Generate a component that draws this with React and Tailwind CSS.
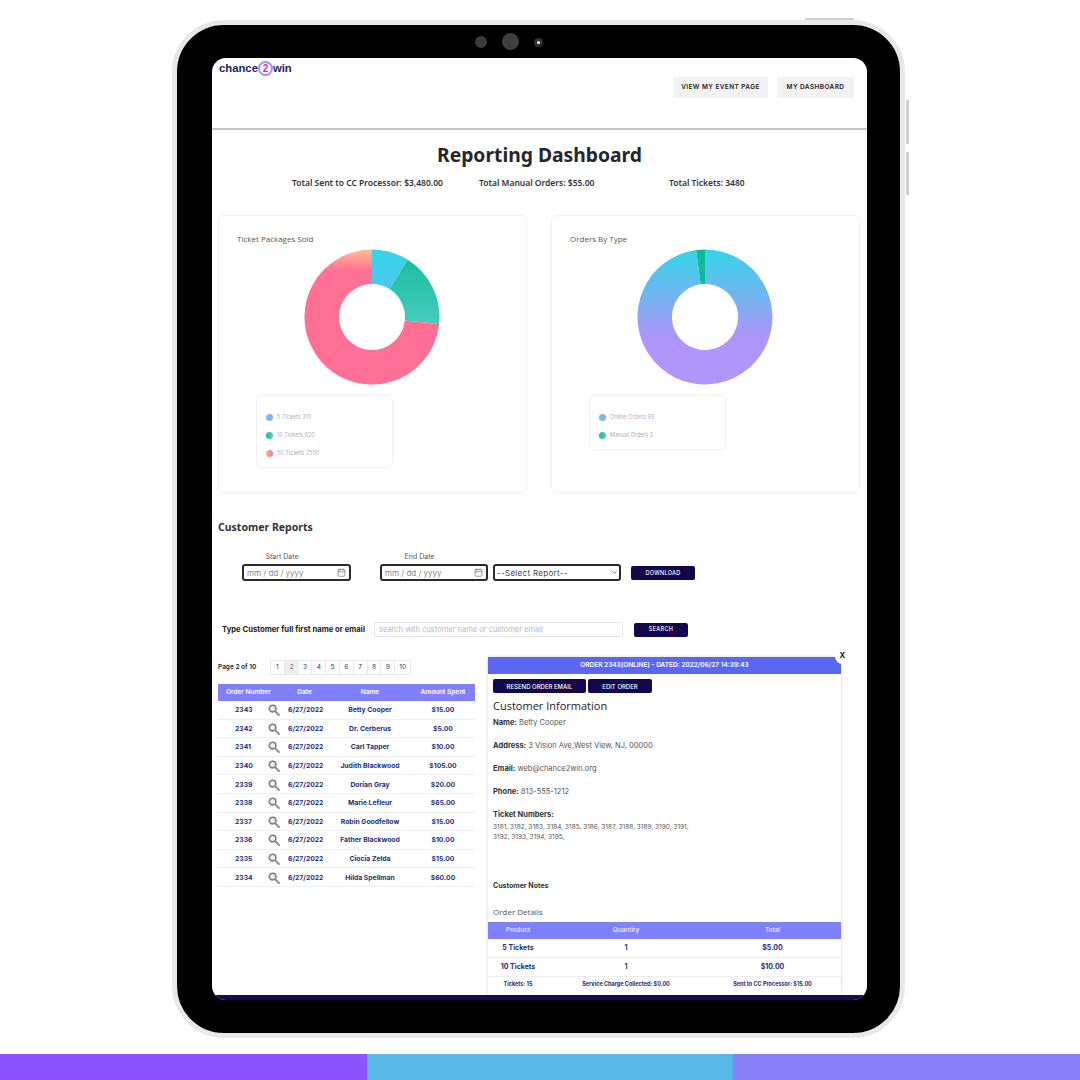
import { Calendar, ChevronDown } from 'lucide-react';

const NAVY = 'text-[#1c2f7a]';

const ORDERS = [
  ['2343', 'Betty Cooper', '$15.00'],
  ['2342', 'Dr. Cerberus', '$5.00'],
  ['2341', 'Carl Tapper', '$10.00'],
  ['2340', 'Judith Blackwood', '$105.00'],
  ['2339', 'Dorian Gray', '$20.00'],
  ['2338', 'Marie Lefleur', '$65.00'],
  ['2337', 'Robin Goodfellow', '$15.00'],
  ['2336', 'Father Blackwood', '$10.00'],
  ['2335', 'Ciocia Zelda', '$15.00'],
  ['2334', 'Hilda Spellman', '$60.00'],
];

const PAGES = [1, 2, 3, 4, 5, 6, 7, 8, 9, 10];

// Build one donut slice, angles in degrees clockwise from 12 o'clock
function slice(start, end, outer = 67.5, inner = 33, c = 68) {
  const pt = (r, a) => {
    const t = ((a - 90) * Math.PI) / 180;
    return `${(c + r * Math.cos(t)).toFixed(2)} ${(c + r * Math.sin(t)).toFixed(2)}`;
  };
  const large = end - start > 180 ? 1 : 0;
  return `M${pt(outer, start)} A${outer} ${outer} 0 ${large} 1 ${pt(outer, end)} L${pt(inner, end)} A${inner} ${inner} 0 ${large} 0 ${pt(inner, start)} Z`;
}

function Grad({ id, from, to, stop = 1 }) {
  return (
    <linearGradient id={id} gradientUnits="userSpaceOnUse" x1="0" y1="0" x2="0" y2={136 * stop}>
      <stop offset="0" stopColor={from} />
      <stop offset="1" stopColor={to} />
    </linearGradient>
  );
}

function PackagesDonut() {
  return (
    <svg width="136" height="136" viewBox="0 0 136 136">
      <defs>
        <Grad id="g1" from="#32d6e8" to="#9aa0fb" />
        <Grad id="g2" from="#12bb9c" to="#55d0c6" stop={0.7} />
        <Grad id="g3" from="#ffc092" to="#ff7096" stop={0.16} />
      </defs>
      <path d={slice(0, 32)} fill="url(#g1)" />
      <path d={slice(32, 96)} fill="url(#g2)" />
      <path d={slice(96, 360)} fill="url(#g3)" />
    </svg>
  );
}

function TypeDonut() {
  return (
    <svg width="136" height="136" viewBox="0 0 136 136">
      <defs>
        <Grad id="g4" from="#32d6e8" to="#b095fa" stop={0.66} />
        <Grad id="g5" from="#0cb99a" to="#14c0a0" />
      </defs>
      <path d={slice(0, 352.4)} fill="url(#g4)" />
      <path d={slice(352.4, 360)} fill="url(#g5)" />
    </svg>
  );
}

function LegendRow({ dot, label }) {
  return (
    <div className="flex items-center gap-[4px] h-[18px]">
      <span className={`w-[7px] h-[7px] rounded-full ${dot}`} />
      <span className="text-[5.5px] text-[#b0b0b8]">{label}</span>
    </div>
  );
}

function ChartCard({ title, chart, legendHeight, children }) {
  return (
    <div className="w-[309px] h-[278px] rounded-[6px] border border-[#f2f2f2] shadow-[0_0_3px_rgba(0,0,0,0.04)] flex flex-col">
      <div className="pl-[18px] pt-[17px] h-[33px] text-[8px] leading-[12px] text-[#555] font-['Open_Sans',sans-serif]">{title}</div>
      <div className="flex justify-center pr-[2px]">{chart}</div>
      <div
        className={`ml-[37px] mt-[10px] w-[137px] ${legendHeight} rounded-[6px] border border-[#f2f2f2] shadow-[0_0_3px_rgba(0,0,0,0.04)] pl-[9px] pt-[12px]`}
      >
        {children}
      </div>
    </div>
  );
}

function DateField({ label, width }) {
  return (
    <div className={`flex flex-col ${width}`}>
      <div className="h-[12px] text-[7px] leading-[10px] text-[#555] text-center pr-[29px]">{label}</div>
      <div className="h-[17px] border-2 border-[#2a2a2a] rounded-[3px] flex items-center justify-between pl-[3px] pr-[3px] text-[8px] text-[#888]">
        <span>mm / dd / yyyy</span>
        <Calendar size={9} strokeWidth={1.5} className="text-[#555]" />
      </div>
    </div>
  );
}

function Magnifier() {
  return (
    <svg width="12" height="12" viewBox="0 0 12 12">
      <circle cx="4.6" cy="4.6" r="3.3" fill="#ececec" stroke="#7d7d7d" strokeWidth="1.6" />
      <path d="M7.2 7.2 L10.9 10.9" stroke="#929292" strokeWidth="2.1" strokeLinecap="round" />
    </svg>
  );
}

function InfoLine({ label, value }) {
  return (
    <div className="h-[23px] text-[7.5px] leading-[10px] text-[#555]">
      <b className="font-bold text-[#333]">{label}</b> {value}
    </div>
  );
}

function OrderRow({ cells, small }) {
  const widths = ['w-[60px]', 'w-[156px]', 'w-[137px]'];
  return (
    <div className={`flex items-center font-bold ${NAVY} ${small ? 'h-[19px] pb-[4px] text-[5.5px]' : 'h-[19px] border-b border-[#eee] text-[7px]'}`}>
      {cells.map((c, i) => (
        <div key={c} className={`${widths[i]} text-center whitespace-nowrap`}>{c}</div>
      ))}
    </div>
  );
}

export default function App() {
  return (
    <div className="w-[1080px] h-[1080px] bg-white flex flex-col font-['Inter',sans-serif] overflow-hidden">
      <div className="h-[1054px] pt-[20px] pl-[172px]">
        {/* Tablet */}
        <div className="relative w-[733px] h-[1018px] rounded-[52px] border-[5px] border-[#e8e8e8] bg-black pl-[35px] pt-[33px]">
          <span className="absolute -top-[7px] left-[628px] w-[49px] h-[2px] bg-[#cfcfcf]" />
          <span className="absolute left-[729px] top-[75px] w-[3px] h-[44px] bg-[#cfcfcf]" />
          <span className="absolute left-[729px] top-[127px] w-[3px] h-[43px] bg-[#cfcfcf]" />
          <span className="absolute left-[298px] top-[11px] w-[12px] h-[12px] rounded-full bg-[#3a3a3a]" />
          <span className="absolute left-[325px] top-[8px] w-[17px] h-[17px] rounded-full bg-[#3f3f3f]" />
          <span className="absolute left-[357px] top-[13px] w-[9px] h-[9px] rounded-full bg-[#333] flex items-center justify-center">
            <span className="w-[3px] h-[3px] rounded-full bg-white" />
          </span>

          {/* Screen */}
          <div className="w-[655px] h-[942px] bg-white rounded-[14px] overflow-hidden flex flex-col">
            <header className="h-[72px] shrink-0 border-b-2 border-[#c8c8c8] flex justify-between">
              <div className="pl-[7px] pt-[3px] flex items-center h-[18px] text-[11.3px] font-bold text-[#241a63] font-['Liberation_Sans',sans-serif]">
                <span>chance</span>
                <span className="w-[15px] h-[15px] rounded-full border-2 border-[#a78bfa] flex items-center justify-center text-[10px] leading-none font-bold text-[#d21ee8]">2</span>
                <span>win</span>
              </div>
              <div className="pt-[19px] pr-[13px] flex gap-[9px]">
                <div className="w-[95px] h-[21px] bg-[#f2f2f2] flex items-center justify-center text-[6.5px] font-semibold tracking-[0.4px] text-[#222]">VIEW MY EVENT PAGE</div>
                <div className="w-[77px] h-[21px] bg-[#f2f2f2] flex items-center justify-center text-[6.5px] font-semibold tracking-[0.4px] text-[#222]">MY DASHBOARD</div>
              </div>
            </header>

            <h1 className="mt-[10px] h-[30px] text-center text-[19.3px] leading-[30px] font-bold text-[#23272b] font-['Noto_Sans',sans-serif]">Reporting Dashboard</h1>

            <div className="mt-[6px] h-[14px] pl-[80px] flex items-center text-[8.5px] font-semibold text-[#333] font-['Noto_Sans',sans-serif]">
              <span className="w-[187px]">Total Sent to CC Processor: $3,480.00</span>
              <span className="w-[190px]">Total Manual Orders: $55.00</span>
              <span>Total Tickets: 3480</span>
            </div>

            <div className="mt-[25px] pl-[6px] flex gap-[24px]">
              <ChartCard title="Ticket Packages Sold" chart={<PackagesDonut />} legendHeight="h-[73px]">
                <LegendRow dot="bg-gradient-to-r from-[#5cc8ee] to-[#9a9cfb]" label="5 Tickets 310" />
                <LegendRow dot="bg-gradient-to-r from-[#12bb9c] to-[#55d0c6]" label="10 Tickets 620" />
                <LegendRow dot="bg-gradient-to-r from-[#ffb090] to-[#ff7096]" label="50 Tickets 2550" />
              </ChartCard>
              <ChartCard title="Orders By Type" chart={<TypeDonut />} legendHeight="h-[55px]">
                <LegendRow dot="bg-gradient-to-r from-[#32d6e8] to-[#a098fa]" label="Online Orders 93" />
                <LegendRow dot="bg-gradient-to-r from-[#0cb99a] to-[#55d0c6]" label="Manual Orders 2" />
              </ChartCard>
            </div>

            <h2 className="mt-[27px] pl-[6px] h-[14px] text-[10.5px] leading-[14px] font-bold text-[#333] font-['Noto_Sans',sans-serif]">Customer Reports</h2>

            <div className="mt-[18px] pl-[30px] flex items-end">
              <DateField label="Start Date" width="w-[109px]" />
              <div className="w-[29px]" />
              <DateField label="End Date" width="w-[108px]" />
              <div className="relative ml-[5px] w-[128px] h-[17px]">
                <select className="block w-full h-full appearance-none border-2 border-[#2a2a2a] rounded-[3px] bg-white pl-[2px] text-[8px] tracking-[0.3px] text-[#444]">
                  <option>--Select Report--</option>
                </select>
                <ChevronDown size={7} strokeWidth={2.5} className="absolute right-[3px] top-[5px] text-[#444]" />
              </div>
              <div className="ml-[10px] mb-[1px] w-[64px] h-[14px] rounded-[2px] bg-[#14074d] flex items-center justify-center text-[5.5px] font-medium tracking-[0.3px] text-white">DOWNLOAD</div>
            </div>

            <div className="mt-[41px] pl-[10px] flex items-center">
              <span className="w-[152px] text-[7.7px] font-bold text-[#222] whitespace-nowrap">Type Customer full first name or email</span>
              <div className="w-[249px] h-[15px] border border-[#e4e4e4] rounded-[2px] pl-[4px] flex items-center text-[7.5px] text-[#b8b8b8]">search with customer name or customer email</div>
              <div className="ml-[11px] w-[54px] h-[14px] rounded-[2px] bg-[#14074d] flex items-center justify-center text-[5.5px] font-medium tracking-[0.3px] text-white">SEARCH</div>
            </div>

            <div className="mt-[19px] pl-[6px] flex gap-[13px] flex-1 min-h-0">
              {/* Orders list */}
              <div className="w-[257px] pt-[4px]">
                <div className="flex items-center h-[15px]">
                  <span className="w-[52px] text-[6.5px] font-semibold text-[#222]">Page 2 of 10</span>
                  <div className="flex h-[15px] border border-[#e8e8e8]">
                    {PAGES.map(p => (
                      <span
                        key={p}
                        className={`${p === 10 ? 'w-[15px]' : 'w-[13.8px]'} flex items-center justify-center text-[6.5px] ${p === 2 ? 'bg-[#eee] text-[#666]' : 'text-[#2a3a7a] border-r border-[#e8e8e8] last:border-r-0'}`}
                      >
                        {p}
                      </span>
                    ))}
                  </div>
                </div>
                <div className="mt-[9px] h-[17px] bg-[#8080fb] grid grid-cols-[50px_20px_33px_98px_48px] items-center text-[6.5px] font-semibold text-white">
                  <span className="col-span-2 pl-[8px] whitespace-nowrap">Order Number</span>
                  <span className="text-center">Date</span>
                  <span className="text-center">Name</span>
                  <span className="text-center whitespace-nowrap">Amount Spent</span>
                </div>
                {ORDERS.map(([num, name, amt]) => (
                  <div key={num} className={`h-[18.6px] pt-[1px] border-b border-[#eee] grid grid-cols-[50px_20px_33px_98px_48px] items-center text-[6.8px] font-bold ${NAVY}`}>
                    <span className="pl-[17px]">{num}</span>
                    <span><Magnifier /></span>
                    <span className="whitespace-nowrap">6/27/2022</span>
                    <span className="text-center whitespace-nowrap">{name}</span>
                    <span className="text-center">{amt}</span>
                  </div>
                ))}
              </div>

              {/* Order detail panel */}
              <div className="relative mt-[1px] w-[353px] self-start h-[338px] shadow-[0_0_3px_rgba(0,0,0,0.18)]">
                <span className="absolute -top-[8px] -right-[9px] w-[15px] h-[15px] rounded-full bg-white flex items-center justify-center text-[9px] font-bold text-[#111] font-['Liberation_Mono',monospace]">X</span>
                <div className="h-[17px] bg-[#5b67f0] flex items-center justify-center text-[6.5px] font-semibold text-white">ORDER 2343(ONLINE) - DATED: 2022/06/27 14:39:43</div>
                <div className="mt-[5px] ml-[5px] flex gap-[2px]">
                  <div className="w-[93px] h-[14px] rounded-[2px] bg-[#14074d] flex items-center justify-center text-[6px] font-medium text-white">RESEND ORDER EMAIL</div>
                  <div className="w-[64px] h-[14px] rounded-[2px] bg-[#14074d] flex items-center justify-center text-[6px] font-medium text-white">EDIT ORDER</div>
                </div>
                <div className="pl-[5px]">
                  <div className="mt-[5px] h-[16px] text-[11px] leading-[16px] text-[#222] font-['Open_Sans',sans-serif]">Customer Information</div>
                  <div className="mt-[4px]">
                    <InfoLine label="Name:" value="Betty Cooper" />
                    <InfoLine label="Address:" value="3 Vision Ave,West View, NJ, 00000" />
                    <InfoLine label="Email:" value="web@chance2win.org" />
                    <InfoLine label="Phone:" value="813-555-1212" />
                  </div>
                  <div className="h-[10px] text-[7.5px] leading-[10px] font-bold text-[#333]">Ticket Numbers:</div>
                  <div className="mt-[2px] w-[210px] text-[6.5px] leading-[10px] text-[#555]">3181, 3182, 3183, 3184, 3185, 3186, 3187, 3188, 3189, 3190, 3191, 3192, 3193, 3194, 3195,</div>
                  <div className="mt-[39px] h-[10px] text-[7px] leading-[10px] font-bold text-[#333]">Customer Notes</div>
                  <div className="mt-[15px] h-[12px] text-[8px] leading-[12px] text-[#555] font-['Open_Sans',sans-serif]">Order Details</div>
                </div>
                <div className="mt-[4px] h-[17px] bg-[#8080fb] flex items-center text-[6.5px] font-medium text-[#eef]">
                  <span className="w-[60px] text-center">Product</span>
                  <span className="w-[156px] text-center">Quantity</span>
                  <span className="w-[137px] text-center">Total</span>
                </div>
                <OrderRow cells={['5 Tickets', '1', '$5.00']} />
                <OrderRow cells={['10 Tickets', '1 ', '$10.00']} />
                <OrderRow small cells={['Tickets: 15', 'Service Charge Collected: $0.00', 'Sent to CC Processor: $15.00']} />
              </div>
            </div>

            <div className="h-[5px] shrink-0 bg-[#1a0a52]" />
          </div>
        </div>
      </div>

      <div className="h-[26px] flex">
        <div className="w-[367px] bg-[#8c52ff]" />
        <div className="w-[366px] bg-[#58b8e6]" />
        <div className="flex-1 bg-[#8880f8]" />
      </div>
    </div>
  );
}
